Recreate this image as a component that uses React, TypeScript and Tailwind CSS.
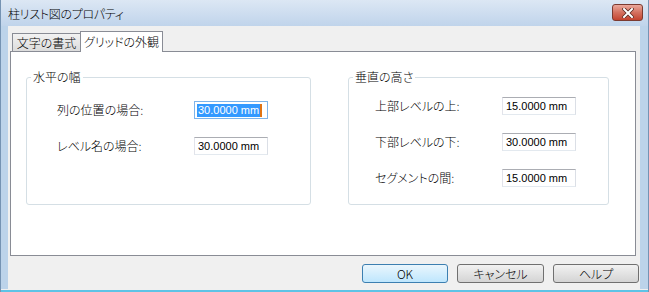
import React from 'react';

const jp = "font-['MS_UI_Gothic','Noto_Sans_CJK_JP',sans-serif] font-light [font-feature-settings:'palt']";
const num = "font-['Liberation_Sans',Arial,sans-serif]";

type FieldProps = { value: string; focused?: boolean };

const Field: React.FC<FieldProps> = ({ value, focused }) => (
  <div
    className={`w-[74px] h-[18px] flex items-center pl-[2px] bg-white border ${
      focused
        ? 'border-[#7eb4ea]'
        : 'border-t-[#abadb3] border-l-[#e2e3ea] border-r-[#dbdfe6] border-b-[#e3e9ef]'
    }`}
  >
    {focused ? (
      <div className="flex items-center">
        <span className={`${num} text-[11px] leading-[13px] bg-[#3399ff] text-white px-px`}>{value}</span>
        <span className="w-[2px] h-[13px] bg-[#e07414]" />
      </div>
    ) : (
      <span className={`${num} text-[11px] leading-[13px] text-black pl-px`}>{value}</span>
    )}
  </div>
);

type Row = { label: string; value: string; focused?: boolean };

const Group: React.FC<{ title: string; rows: Row[]; className: string; labelW: string; pt: string; gap: string }> = ({
  title,
  rows,
  className,
  labelW,
  pt,
  gap,
}) => (
  <div className={`relative border border-[#d5dfe5] rounded-[3px] ${className}`}>
    {/* legend sits over the top border */}
    <span className={`${jp} absolute -top-[8px] left-[4px] bg-white px-[2px] text-[12px] leading-[14px] text-black`}>
      {title}
    </span>
    <div className={`flex flex-col ${pt} ${gap}`}>
      {rows.map((r) => (
        <div key={r.label} className="flex items-center">
          <span className={`${jp} ${labelW} text-[12px] leading-[14px] text-black`}>{r.label}</span>
          <Field value={r.value} focused={r.focused} />
        </div>
      ))}
    </div>
  </div>
);

const App: React.FC = () => {
  return (
    <div className="w-[649px] h-[292px] flex flex-col bg-[#bcd3ea] border-l border-r border-[#7593b3] overflow-hidden">
      {/* Title bar */}
      <div className="h-[26px] flex items-center justify-between pl-[7px] pr-[5px] bg-gradient-to-b from-[#dce7f4] to-[#c0d4eb]">
        <span className={`${jp} text-[12px] leading-[14px] text-black tracking-[-0.3px] mt-px`}>柱リスト図のプロパティ</span>
        <div className="w-[31px] h-[17px] -mt-[1px] rounded-[3px] border border-[#7b3a30] bg-gradient-to-b from-[#eaa89c] via-[#d4705f] to-[#c3432f] flex items-center justify-center">
          <svg width="12" height="10" viewBox="0 0 12 10">
            <path d="M2 1 L10 9 M10 1 L2 9" stroke="#5a2a22" strokeWidth="3.6" strokeLinecap="square" />
            <path d="M2 1 L10 9 M10 1 L2 9" stroke="#ffffff" strokeWidth="2" strokeLinecap="square" />
          </svg>
        </div>
      </div>

      {/* Client area */}
      <div className="flex-1 ml-[7px] mr-[8px] bg-[#f0f0f0] flex flex-col">
        {/* Tabs */}
        <div className="h-[25px] flex items-end pl-[4px]">
          <div
            className={`${jp} w-[69px] h-[18px] flex items-center justify-center border border-b-0 border-[#898c95] bg-gradient-to-b from-[#f2f2f2] to-[#dcdcdc] text-[12px] leading-[14px] text-black`}
          >
            文字の書式
          </div>
          <div
            className={`${jp} relative z-10 -ml-px -mb-px w-[83px] h-[21px] flex items-start pt-[3px] justify-center border border-b-0 border-[#898c95] bg-white text-[12px] leading-[14px] text-black`}
          >
            グリッドの外観
          </div>
        </div>

        {/* Panel */}
        <div className="ml-[2px] mr-[4px] h-[205px] border border-[#898c95] bg-white flex items-start pl-[15px] pt-[25px]">
          <Group
            title="水平の幅"
            className="w-[285px] h-[128px] pl-[30px]"
            labelW="w-[137px]"
            pt="pt-[23px]"
            gap="gap-[18px]"
            rows={[
              { label: '列の位置の場合:', value: '30.0000 mm', focused: true },
              { label: 'レベル名の場合:', value: '30.0000 mm' },
            ]}
          />
          <Group
            title="垂直の高さ"
            className="ml-[37px] w-[261px] h-[128px] pl-[26px]"
            labelW="w-[127px]"
            pt="pt-[19px]"
            gap="gap-[18px]"
            rows={[
              { label: '上部レベルの上:', value: '15.0000 mm' },
              { label: '下部レベルの下:', value: '30.0000 mm' },
              { label: 'セグメントの間:', value: '15.0000 mm' },
            ]}
          />
        </div>

        {/* Buttons */}
        <div className="flex justify-end gap-[9px] pr-[1px] pt-[8px]">
          <button className={`${jp} w-[86px] h-[19px] rounded-[3px] border border-[#3c7fb1] bg-gradient-to-b from-[#eaf6fd] to-[#bee6fd] text-[12px] leading-[14px] text-black`}>
            OK
          </button>
          <button className={`${jp} w-[87px] h-[19px] rounded-[3px] border border-[#707070] bg-gradient-to-b from-[#f2f2f2] to-[#d4d4d4] text-[12px] leading-[14px] text-black`}>
            キャンセル
          </button>
          <button className={`${jp} w-[86px] h-[19px] rounded-[3px] border border-[#707070] bg-gradient-to-b from-[#f2f2f2] to-[#d4d4d4] text-[12px] leading-[14px] text-black`}>
            ヘルプ
          </button>
        </div>
      </div>

      {/* Bottom frame */}
      <div className="h-[3px] border-t border-[#f0f0f0] bg-[#5ec3e6]" />
    </div>
  );
};

export default App;
